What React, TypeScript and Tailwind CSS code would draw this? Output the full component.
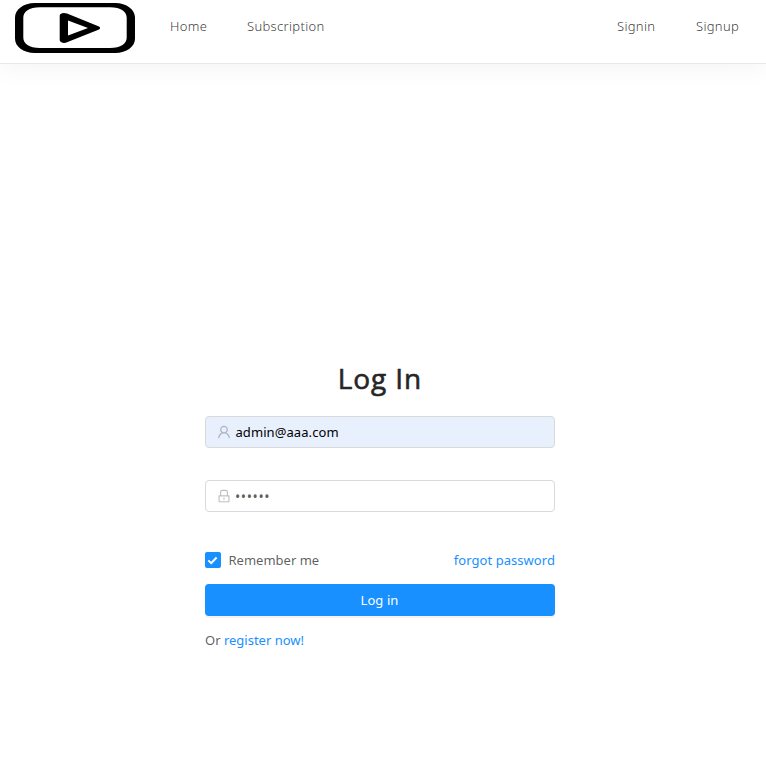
const USER_PATH =
  'M858.5 763.6a374 374 0 0 0-80.6-119.5 375.63 375.63 0 0 0-119.5-80.6c-.4-.2-.8-.3-1.2-.5C719.5 518 760 444.7 760 362c0-137-111-248-248-248S264 225 264 362c0 82.7 40.5 156 102.8 201.1-.4.2-.8.3-1.2.5-44.8 18.9-85 46-119.5 80.6a375.63 375.63 0 0 0-80.6 119.5A371.7 371.7 0 0 0 136 901.8a8 8 0 0 0 8 8.2h60c4.4 0 7.9-3.5 8-7.8 2-77.2 33-149.5 87.8-204.3 56.7-56.7 132-87.9 212.2-87.9s155.5 31.2 212.2 87.9C779 752.7 810 825 812 902.2c.1 4.4 3.6 7.8 8 7.8h60a8 8 0 0 0 8-8.2c-1-47.8-10.9-94.3-29.5-138.2zM512 534c-45.9 0-89.1-17.9-121.6-50.4S340 407.9 340 362c0-45.9 17.9-89.1 50.4-121.6S466.1 190 512 190s89.1 17.9 121.6 50.4S684 316.1 684 362c0 45.9-17.9 89.1-50.4 121.6S557.9 534 512 534z';
const LOCK_PATH =
  'M832 464h-68V240c0-70.7-57.3-128-128-128H388c-70.7 0-128 57.3-128 128v224h-68c-17.7 0-32 14.3-32 32v384c0 17.7 14.3 32 32 32h640c17.7 0 32-14.3 32-32V496c0-17.7-14.3-32-32-32zM332 240c0-30.9 25.1-56 56-56h248c30.9 0 56 25.1 56 56v224H332V240zm460 600H232V536h560v304zM484 701v53c0 4.4 3.6 8 8 8h40c4.4 0 8-3.6 8-8v-53a48.1 48.1 0 1 0-56 0z';

function FieldIcon({ path }: { path: string }) {
  return (
    <svg viewBox="64 64 896 896" className="size-[14px] shrink-0 fill-black/25" aria-hidden="true">
      <path d={path} />
    </svg>
  );
}

function Logo() {
  return (
    <svg viewBox="0 0 120 50" className="h-[50px] w-[120px]" aria-label="Home">
      <path
        fillRule="evenodd"
        d="M20 0H100C112 0 120 7 120 14.500V35.500C120 43.500 112 50 100 50H20C8 50 0 43.500 0 35.500V14.500C0 7 8 0 20 0ZM25 4.300C14 4.300 8.300 9 8.300 14.500V34.500C8.300 40.500 14 45 25 45H95C106 45 111.700 40.500 111.700 34.500V14.500C111.700 9 106 4.300 95 4.300Z"
      />
      <path
        fillRule="evenodd"
        d="M44.700 12.500C44.700 10 49 9.200 52 10.500L84 23.500C85.500 24.300 85.500 25.700 84 26.500L52 39.300C49 40.700 44.700 39.500 44.700 37ZM53 17.500V32.500L73 25Z"
      />
    </svg>
  );
}

export default function App() {
  return (
    <div className="min-h-screen bg-white font-['Noto_Sans',sans-serif] text-sm leading-[22px] text-black/65">
      <header className="flex h-16 items-start border-b border-[#e8e8e8] bg-white pt-[3px] pl-[15px] pr-[27px] shadow-[0_0_30px_#f3f1f1]">
        <Logo />
        <nav className="ml-[35px] flex flex-1 pt-[12px] text-[13px] font-light tracking-[0.32px] text-black/80">
          <a className="w-[77px]">Home</a>
          <a>Subscription</a>
          <a className="ml-auto w-[79px]">Signin</a>
          <a className="w-[43px]">Signup</a>
        </nav>
      </header>
      <main className="mx-auto w-[350px] -translate-x-[3px] pt-[292px]">
        <h1 className="text-center font-['Open_Sans',sans-serif] text-[28px] leading-[45px] font-normal tracking-[0.9px] text-[#262626] [-webkit-text-stroke:0.6px_#262626]">
          Log In
        </h1>
        <form className="mt-[15px]" onSubmit={(e) => e.preventDefault()}>
          <div className="flex h-8 items-center gap-[4.5px] rounded border border-[#d9d9d9] bg-[#e8f0fe] pl-[11px]">
            <FieldIcon path={USER_PATH} />
            <span className="text-[13px] tracking-[0.08px] text-black">admin@aaa.com</span>
          </div>
          <div className="mt-8 flex h-8 items-center gap-[4px] rounded border border-[#d9d9d9] bg-white pl-[11px]">
            <FieldIcon path={LOCK_PATH} />
            <span className="pt-[2px] text-[14px] tracking-[0.6px]">••••••</span>
          </div>
          <div className="mt-[37px] flex h-[22px] items-center text-[13px]">
            <span className="flex size-4 items-center justify-center rounded-[2px] bg-[#1890ff]">
              <svg viewBox="0 0 16 16" className="size-4 fill-none stroke-white stroke-2">
                <path d="M3.300 8.400L6.200 11.200L11.600 5.500" />
              </svg>
            </span>
            <span className="ml-[7.5px]">Remember me</span>
            <a className="ml-auto tracking-[0.05px] text-[#1890ff]">forgot password</a>
          </div>
          <button className="mt-[13px] h-8 w-full rounded bg-[#1890ff] pr-px text-[13px] tracking-[0.1px] text-white shadow-[0_2px_0_rgba(0,0,0,0.045)]">
            Log in
          </button>
          <p className="mt-[13px] text-[13px]">
            Or <a className="text-[#1890ff]">register now!</a>
          </p>
        </form>
      </main>
    </div>
  );
}
